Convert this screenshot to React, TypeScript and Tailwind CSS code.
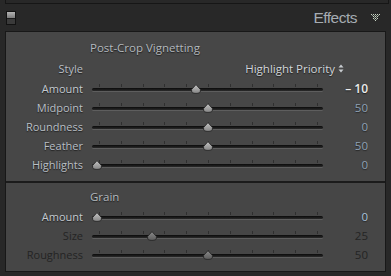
import React from "react";

const font = { fontFamily: '"Open Sans", "Noto Sans", sans-serif' };

const Thumb = ({ dim }: { dim?: boolean }) => (
  <svg width="10" height="10" viewBox="0 0 10 10">
    <defs>
      <linearGradient id={dim ? "thd" : "th"} x1="0" y1="0" x2="0" y2="1">
        <stop offset="0" stopColor={dim ? "#8a8a8a" : "#c4c4c4"} />
        <stop offset="1" stopColor={dim ? "#5c5c5c" : "#858585"} />
      </linearGradient>
    </defs>
    <path
      d="M5 0.6 L9.4 5.4 L9.4 7 Q9.4 9.4 5 9.4 Q0.6 9.4 0.6 7 L0.6 5.4 Z"
      fill={`url(#${dim ? "thd" : "th"})`}
      stroke="#262626"
      strokeWidth="0.9"
    />
  </svg>
);

const Slider = ({ pos, dim }: { pos: number; dim?: boolean }) => (
  <div className="relative w-[231px] h-[19px]">
    <div className="absolute left-[7px] right-[5px] top-[5px] flex justify-between">
      {Array.from({ length: 11 }).map((_, i) => (
        <span key={i} className="w-px h-[3px] bg-[#2f2f2f]" />
      ))}
    </div>
    <div className="absolute left-0 right-0 top-[9px] h-[3px] rounded-full bg-gradient-to-b from-[#0b0b0b] to-[#2b2b2b] shadow-[0_1px_0_#5e5e5e]" />
    <div className="absolute top-[5px]" style={{ left: Math.round(pos * 221) }}>
      <Thumb dim={dim} />
    </div>
  </div>
);

type RowProps = {
  label: string;
  value: string;
  pos: number;
  labelCls?: string;
  valueCls?: string;
  dim?: boolean;
};

const Row = ({ label, value, pos, labelCls, valueCls, dim }: RowProps) => (
  <div className="flex items-center h-[19px]">
    <span className={`w-[77px] text-right text-[11px] leading-none ${labelCls ?? "text-[#b9bfc5] [text-shadow:0_1px_1px_#1e1e1e]"}`}>
      {label}
    </span>
    <div className="ml-[9px]">
      <Slider pos={pos} dim={dim} />
    </div>
    <span className={`w-[45px] text-right text-[11.5px] leading-none ${valueCls ?? "text-[#8fa1b5] [text-shadow:0_1px_1px_#262626]"}`}>
      {value}
    </span>
  </div>
);

export default function App() {
  return (
    <div className="w-[391px] h-[276px] bg-[#282828] overflow-hidden" style={font}>
      {/* previous panel's bottom edge */}
      <div className="ml-[5px] w-[384px] h-[4px] border-x border-b border-[#161616]" />

      {/* header */}
      <div className="h-[27px] flex items-center pl-[6px] pr-[11px]">
        <div className="w-[10px] h-[14px] border border-[#121212] flex flex-col">
          <div className="h-[6px] bg-gradient-to-b from-[#b4b4b4] to-[#7c7c7c]" />
          <div className="flex-1 bg-[#3a3a3a] border-t border-[#1c1c1c]" />
        </div>
        <div className="flex-1" />
        <span
          className="text-[15.5px] leading-none tracking-[-0.5px] text-[#a6acb2] mt-[1px]"
          style={{ fontFamily: '"Liberation Sans", Arial, sans-serif' }}
        >
          Effects
        </span>
        <svg width="9" height="8" viewBox="0 0 9 8" className="ml-[14px]">
          {[
            [0, 0], [2, 0], [4, 0], [6, 0], [8, 0],
            [1, 1], [3, 1], [5, 1], [7, 1],
            [2, 2], [4, 2], [6, 2],
            [3, 3], [5, 3],
            [2, 4], [4, 4], [6, 4],
            [3, 5], [5, 5],
            [4, 6],
          ].map(([x, y], i) => (
            <rect key={i} x={x} y={y} width="1" height="1" fill={y % 2 === 0 ? "#c7d3c3" : "#8e9a8c"} />
          ))}
        </svg>
      </div>

      {/* panel */}
      <div className="ml-[5px] w-[381px] border border-[#181818] bg-[#474747]">
        {/* Post-Crop Vignetting */}
        <div className="pt-[6px] pb-[7px]">
          <div className="h-[20px] flex items-center pl-[84px] text-[11.5px] text-[#b3b8bd] [text-shadow:0_1px_1px_#1e1e1e]">
            Post-Crop Vignetting
          </div>
          <div className="h-[21px] flex items-center">
            <span className="w-[77px] text-right text-[11px] leading-none text-[#b9bfc5] [text-shadow:0_1px_1px_#1e1e1e]">
              Style
            </span>
            <div className="flex-1 flex items-center justify-end pr-[41px] gap-[3px]">
              <span className="text-[11.5px] leading-none text-[#d2d6da] [text-shadow:0_1px_1px_#1e1e1e]">
                Highlight Priority
              </span>
              <svg width="6" height="9" viewBox="0 0 6 9">
                <path d="M3 0.5 L5.5 3.5 L0.5 3.5 Z" fill="#c8ccd0" />
                <path d="M3 8.5 L5.5 5.5 L0.5 5.5 Z" fill="#c8ccd0" />
              </svg>
            </div>
          </div>
          <Row
            label="Amount"
            value="– 10"
            pos={0.45}
            labelCls="text-[#c4cad0] [text-shadow:0_1px_1px_#1e1e1e]"
            valueCls="text-[#ececec] font-semibold text-[12px] [text-shadow:0_1px_1px_#222]"
          />
          <Row label="Midpoint" value="50" pos={0.5} />
          <Row label="Roundness" value="0" pos={0.5} />
          <Row label="Feather" value="50" pos={0.5} />
          <Row label="Highlights" value="0" pos={0} />
        </div>

        <div className="h-[2px] bg-[#1b1b1b]" />

        {/* Grain */}
        <div className="pt-[4px] pb-[7px] bg-[#464646]">
          <div className="h-[20px] flex items-center pl-[84px] text-[11.5px] text-[#b3b8bd] [text-shadow:0_1px_1px_#1e1e1e]">
            Grain
          </div>
          <Row
            label="Amount"
            value="0"
            pos={0}
            labelCls="text-[#c4cad0] [text-shadow:0_1px_1px_#1e1e1e]"
            valueCls="text-[#a9c3dc] [text-shadow:0_1px_1px_#262626]"
          />
          <Row
            label="Size"
            value="25"
            pos={0.25}
            dim
            labelCls="text-[#242424]"
            valueCls="text-[#242424]"
          />
          <Row
            label="Roughness"
            value="50"
            pos={0.5}
            dim
            labelCls="text-[#242424]"
            valueCls="text-[#242424]"
          />
        </div>
      </div>
    </div>
  );
}
